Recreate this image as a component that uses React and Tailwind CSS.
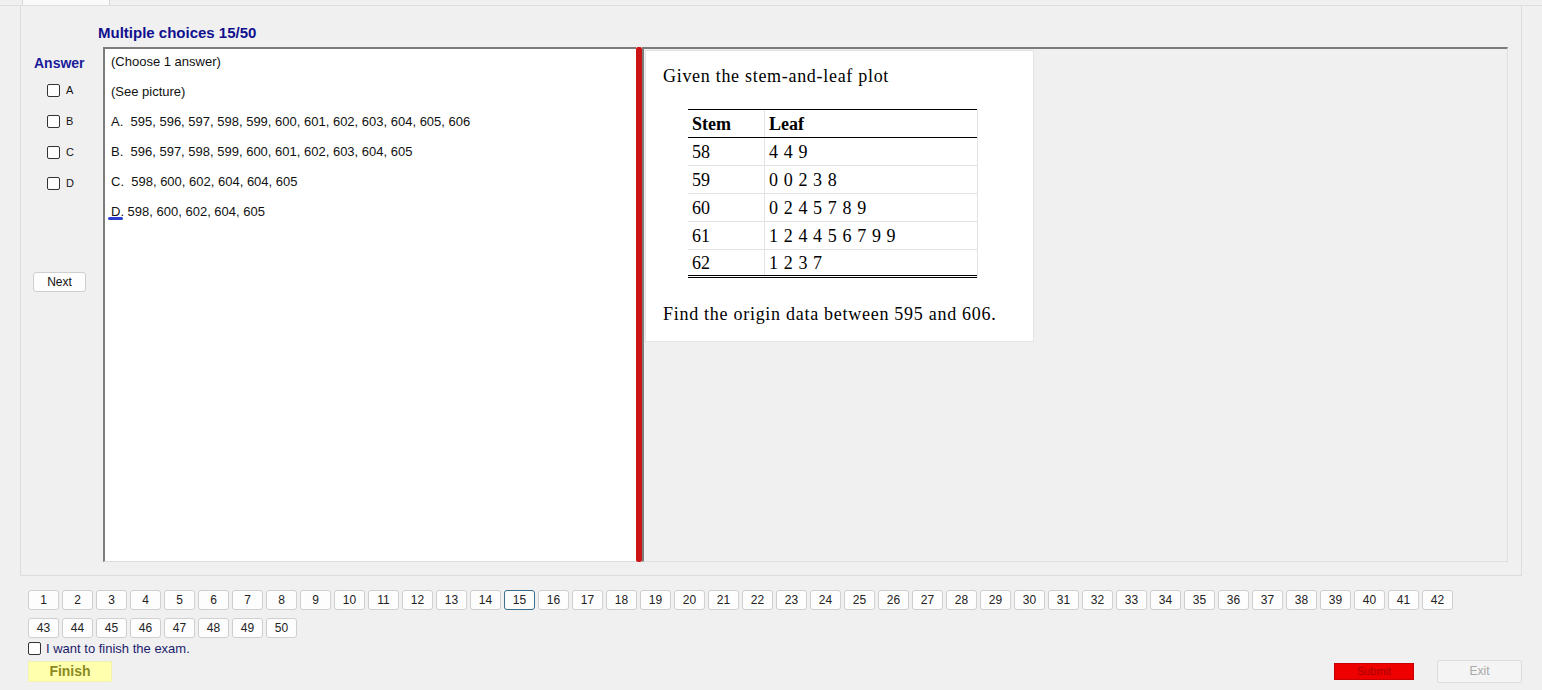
const answerLines = [
  "(Choose 1 answer)",
  "(See picture)",
  "A.  595, 596, 597, 598, 599, 600, 601, 602, 603, 604, 605, 606",
  "B.  596, 597, 598, 599, 600, 601, 602, 603, 604, 605",
  "C.  598, 600, 602, 604, 604, 605",
];

const stemRows = [
  ["58", "4 4 9"],
  ["59", "0 0 2 3 8"],
  ["60", "0 2 4 5 7 8 9"],
  ["61", "1 2 4 4 5 6 7 9 9"],
  ["62", "1 2 3 7"],
];

const questions = Array.from({ length: 50 }, (_, i) => i + 1);

function Box() {
  return <span className="block h-[13px] w-[13px] shrink-0 rounded-[2px] border border-[#333] bg-white" />;
}

function StemLeaf() {
  return (
    <div className="ml-[42px] mt-[22px] w-[290px] border-r border-[#e3e3e3]">
      <div className="grid h-[29px] grid-cols-[77px_1fr] border-y border-black font-bold">
        <div className="flex items-center border-r border-[#e3e3e3] pl-[4px]">Stem</div>
        <div className="flex items-center pl-[4px]">Leaf</div>
      </div>
      {stemRows.map(([stem, leaf], i) => (
        <div
          key={stem}
          className={`grid h-[28px] grid-cols-[77px_1fr] ${
            i === stemRows.length - 1 ? "border-b-[3px] border-double border-black" : "border-b border-[#e3e3e3]"
          }`}
        >
          <div className="flex items-center border-r border-[#e3e3e3] pl-[4px]">{stem}</div>
          <div className="flex items-center pl-[4px] tracking-[0.6px]">{leaf}</div>
        </div>
      ))}
    </div>
  );
}

export default function App() {
  return (
    <div className="h-[690px] w-[1542px] overflow-hidden bg-[#f0f0f0] font-['Liberation_Sans',Arial,sans-serif] text-[#111]">
      {/* tab strip */}
      <div className="flex h-[6px] border-b border-[#dedede]">
        <div className="ml-[22px] h-[5px] w-[88px] border-x border-[#d8d8d8] bg-[#fafafa]" />
      </div>

      {/* main panel */}
      <div className="ml-[20px] h-[570px] w-[1502px] border border-t-0 border-[#dcdcdc]">
        <div className="h-[41px] pl-[77px] pt-[19px] text-[15px] font-bold leading-[16px] text-[#10108f]">
          Multiple choices 15/50
        </div>

        <div className="flex h-[515px]">
          {/* answer column */}
          <div className="flex w-[82px] flex-col">
            <div className="mt-[8px] pl-[13px] text-[14px] font-bold leading-[16px] text-[#1a1a9a]">Answer</div>
            <div className="mt-[4px] flex flex-col">
              {["A", "B", "C", "D"].map((l) => (
                <div key={l} className="flex h-[31px] items-center gap-[6px] pl-[26px] text-[11px]">
                  <Box />
                  <span>{l}</span>
                </div>
              ))}
            </div>
            <button className="ml-[12px] mt-[73px] h-[20px] w-[53px] rounded-[3px] border border-[#cfcfcf] bg-[#fdfdfd] text-[12px] leading-[18px]">
              Next
            </button>
          </div>

          {/* answer text box */}
          <div className="flex w-[533px] flex-col gap-[14px] border-l-2 border-t-2 border-[#7c7c7c] border-b border-b-[#dcdcdc] bg-white pl-[6px] pt-[5px] text-[13px] leading-[16px]">
            {answerLines.map((t) => (
              <div key={t} className="whitespace-pre">
                {t}
              </div>
            ))}
            <div className="whitespace-pre">
              <span className="relative">
                D.
                <span className="absolute left-[-3px] top-[13px] h-[3px] w-[15px] rounded-full bg-[#2a3fd0]" />
              </span>
              {" 598, 600, 602, 604, 605"}
            </div>
          </div>

          {/* splitter */}
          <div className="w-[6px] rounded-[2px] bg-[#cc1414]" />

          {/* picture panel */}
          <div className="w-[866px] border-l-2 border-t-2 border-[#7c7c7c] border-r border-r-[#e0e0e0] border-b border-b-[#e0e0e0] pl-[1px] pt-[1px]">
            <div className="h-[292px] w-[389px] border border-[#e4e4e4] bg-white pt-[14px] font-['Liberation_Serif','Times_New_Roman',serif] text-[18px] leading-[22px] text-black">
              <div className="pl-[17px] tracking-[0.7px]">Given the stem-and-leaf plot</div>
              <StemLeaf />
              <div className="mt-[25px] pl-[17px] tracking-[0.72px]">Find the origin data between 595 and 606.</div>
            </div>
          </div>
        </div>
      </div>

      {/* bottom */}
      <div className="pl-[28px] pr-[20px] pt-[14px]">
        <div className="flex w-[1428px] flex-wrap gap-x-[3px] gap-y-[8px]">
          {questions.map((n) => (
            <button
              key={n}
              className={`h-[20px] w-[31px] rounded-[3px] border bg-[#fdfdfd] text-[12px] leading-[18px] text-[#222] ${
                n === 15 ? "border-[#3a6f8f]" : "border-[#cfcfcf]"
              }`}
            >
              {n}
            </button>
          ))}
        </div>
        <div className="mt-[2px] flex h-[17px] items-center gap-[5px] text-[13px] text-[#1c1c6c]">
          <Box />
          <span>I want to finish the exam.</span>
        </div>
        <div className="mt-[3px] flex items-center">
          <button className="h-[21px] w-[84px] border border-[#f2f2b0] bg-[#ffffae] text-[14px] font-bold leading-[19px] text-[#8a8a1e]">
            Finish
          </button>
          <button className="ml-auto h-[17px] w-[80px] border border-[#c80000] bg-[#ee0000] text-[11px] leading-[15px] text-[#a80000]">
            Submit
          </button>
          <button className="ml-[23px] h-[23px] w-[85px] rounded-[2px] border border-[#dcdcdc] bg-[#f4f4f4] text-[12px] leading-[21px] text-[#a8a8a8]">
            Exit
          </button>
        </div>
      </div>
    </div>
  );
}
